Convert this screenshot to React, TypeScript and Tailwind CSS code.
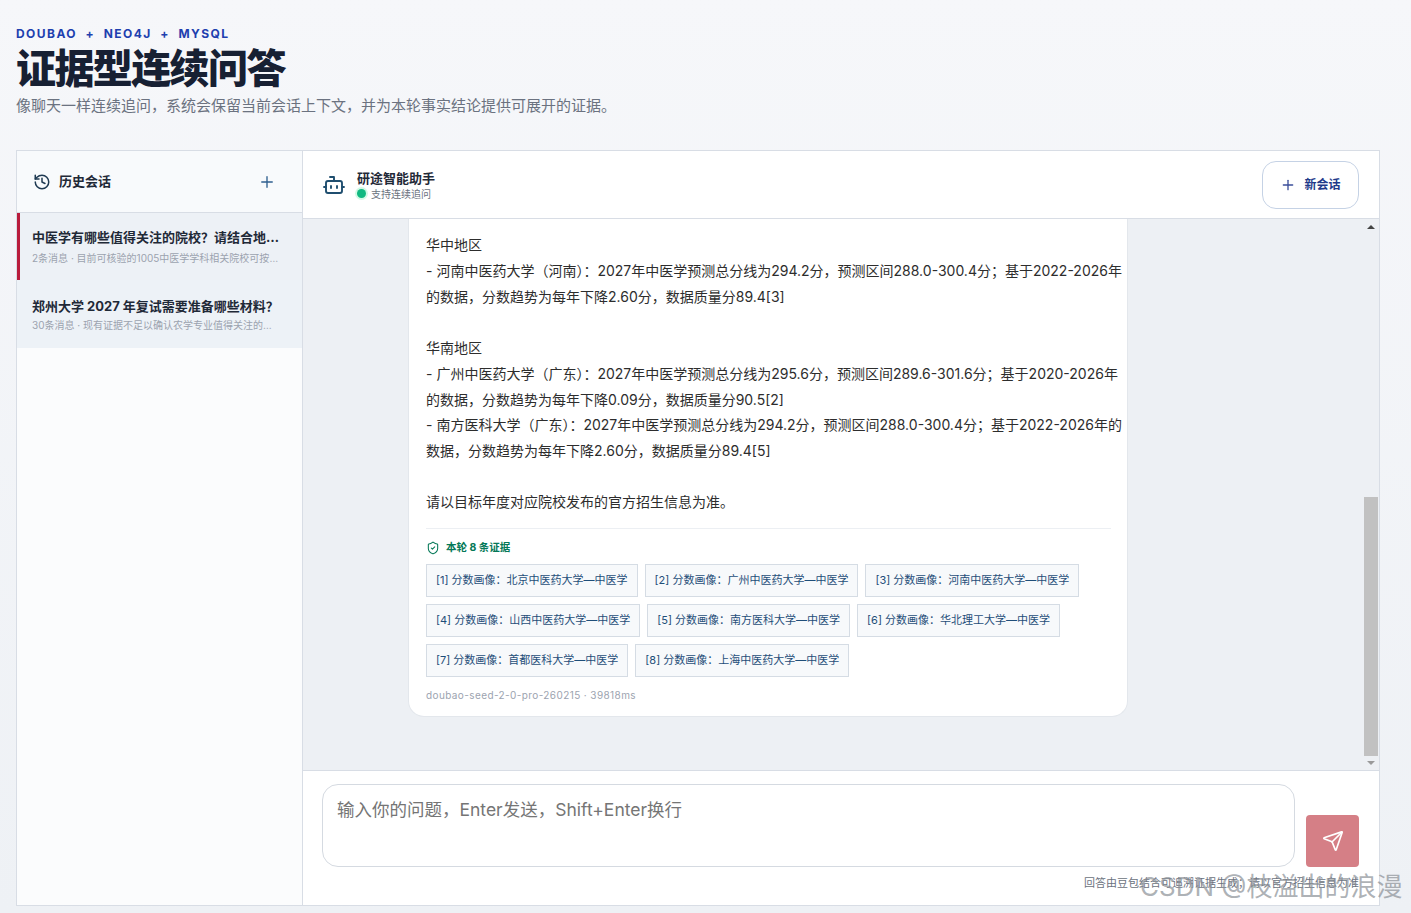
import { Bot, History, Plus, Send, ShieldCheck } from "lucide-react";

const lines = [
  "华中地区",
  "- 河南中医药大学（河南）：2027年中医学预测总分线为294.2分，预测区间288.0-300.4分；基于2022-2026年",
  "的数据，分数趋势为每年下降2.60分，数据质量分89.4[3]",
  "",
  "华南地区",
  "- 广州中医药大学（广东）：2027年中医学预测总分线为295.6分，预测区间289.6-301.6分；基于2020-2026年",
  "的数据，分数趋势为每年下降0.09分，数据质量分90.5[2]",
  "- 南方医科大学（广东）：2027年中医学预测总分线为294.2分，预测区间288.0-300.4分；基于2022-2026年的",
  "数据，分数趋势为每年下降2.60分，数据质量分89.4[5]",
  "",
  "请以目标年度对应院校发布的官方招生信息为准。",
];

const chips = [
  ["[1] 分数画像：北京中医药大学—中医学", "[2] 分数画像：广州中医药大学—中医学", "[3] 分数画像：河南中医药大学—中医学"],
  ["[4] 分数画像：山西中医药大学—中医学", "[5] 分数画像：南方医科大学—中医学", "[6] 分数画像：华北理工大学—中医学"],
  ["[7] 分数画像：首都医科大学—中医学", "[8] 分数画像：上海中医药大学—中医学"],
];

export default function App() {
  return (
    <div className="relative h-[913px] overflow-hidden bg-gradient-to-b from-[#f6f7fa] to-[#eef1f5] pl-4 pr-[31px] pt-[26px] font-[Inter,'Noto_Sans_CJK_SC',sans-serif]">
      <header className="h-[124px]">
        <p className="text-[12px] font-bold leading-4 tracking-[0.12em] text-[#1e40af] whitespace-pre">DOUBAO  +  NEO4J  +  MYSQL</p>
        <h1 className="mt-[3px] text-[40px] font-black leading-[48px] tracking-[-0.04em] text-[#172033]">证据型连续问答</h1>
        <p className="mt-[1px] text-[15px] leading-6 text-[#6b7280]">像聊天一样连续追问，系统会保留当前会话上下文，并为本轮事实结论提供可展开的证据。</p>
      </header>

      <main className="flex h-[756px] border border-[#d8dde5] bg-white">
        <aside className="flex w-[286px] shrink-0 flex-col border-r border-[#d8dde5] bg-[#fbfcfd]">
          <div className="flex h-[62px] shrink-0 items-center justify-between border-b border-[#d8dde5] bg-[#f8fafc] pl-4 pr-[26px]">
            <div className="flex items-center gap-2">
              <History size={18} strokeWidth={2} className="text-[#1f3a52]" />
              <span className="text-[13px] font-bold text-[#1f2937]">历史会话</span>
            </div>
            <Plus size={18} strokeWidth={1.8} className="text-[#2f5f8f]" />
          </div>
          <div className="flex h-[67px] flex-col justify-center border-l-[3px] border-[#b91c3c] bg-[#edf1f6] pl-3 pr-[22px]">
            <p className="truncate text-[13px] font-bold leading-5 text-[#1f2937]">中医学有哪些值得关注的院校？请结合地区和分数线</p>
            <p className="mt-[3px] truncate text-[10px] leading-4 text-[#9ca3af]">2条消息 · 目前可核验的1005中医学学科相关院校可按地区分类</p>
          </div>
          <div className="flex h-[68px] flex-col justify-center bg-[#edf2f7] pl-[15px] pr-[22px]">
            <p className="truncate text-[13px] font-bold leading-5 text-[#1f2937]">郑州大学 2027 年复试需要准备哪些材料？</p>
            <p className="mt-[1px] truncate text-[10px] leading-4 text-[#9ca3af]">30条消息 · 现有证据不足以确认农学专业值得关注的院校和地区</p>
          </div>
        </aside>

        <section className="flex min-w-0 flex-1 flex-col">
          <div className="flex h-[68px] shrink-0 items-center justify-between border-b border-[#d8dde5] pl-[19px] pr-5">
            <div className="flex items-center gap-[11px]">
              <Bot size={24} strokeWidth={1.9} className="text-[#1f4e6f]" />
              <div>
                <p className="text-[13px] font-bold leading-[18px] text-[#1f2937]">研途智能助手</p>
                <div className="flex items-center gap-[5px]">
                  <span className="h-[9px] w-[9px] rounded-full bg-[#10b981] shadow-[0_0_0_2px_#d1fae5]" />
                  <span className="text-[10px] leading-[14px] text-[#6b7280]">支持连续追问</span>
                </div>
              </div>
            </div>
            <button className="flex h-[48px] w-[97px] items-center justify-center gap-2 rounded-[14px] border border-[#c5d2e5] bg-white text-[12px] font-bold text-[#1e3a8a]">
              <Plus size={16} strokeWidth={2} className="text-[#3b4f9a]" />
              新会话
            </button>
          </div>

          <div className="flex h-[552px] shrink-0 border-b border-[#d8dde5] bg-[#edf0f4]">
            <div className="flex min-w-0 flex-1 flex-col justify-end overflow-hidden pb-[53px] pl-[105px]">
              <article className="w-[720px] rounded-b-2xl border-b border-r border-l border-[#e3e7ec] bg-white pb-[13px] pl-[17px] pr-4 pt-[14px]">
                <div className="text-[14px] leading-[25.7px] text-[#2d2d2d]">
                  {lines.map((line, i) => (
                    <p key={i} className="h-[25.7px] whitespace-pre">{line}</p>
                  ))}
                </div>
                <div className="mt-[13px] border-t border-[#eceff3] pt-[11px]">
                  <div className="flex items-center gap-[6px]">
                    <ShieldCheck size={14} strokeWidth={1.8} className="text-[#047857]" />
                    <span className="text-[10.5px] font-bold leading-4 text-[#047857]">本轮 8 条证据</span>
                  </div>
                  <div className="mt-2 flex flex-col gap-[7px]">
                    {chips.map((row, i) => (
                      <div key={i} className="flex gap-[7px]">
                        {row.map((chip) => (
                          <span key={chip} className="flex h-[33px] items-center border border-[#d5dce4] bg-[#f7f9fb] px-[9px] text-[11px] whitespace-nowrap text-[#1f4e79]">{chip}</span>
                        ))}
                      </div>
                    ))}
                  </div>
                  <p className="mt-[10px] text-[10px] leading-4 tracking-[0.04em] text-[#9ca3af]">doubao-seed-2-0-pro-260215 · 39818ms</p>
                </div>
              </article>
            </div>
            <div className="flex w-[17px] shrink-0 flex-col items-center pt-[6px] pb-[5px]">
              <span className="h-0 w-0 border-x-[4px] border-b-[4px] border-x-transparent border-b-[#444]" />
              <span className="flex-1" />
              <span className="h-[259px] w-[14px] bg-[#c1c1c1]" />
              <span className="mt-[5px] h-0 w-0 border-x-[4px] border-t-[4px] border-x-transparent border-t-[#9a9a9a]" />
            </div>
          </div>

          <div className="flex flex-1 gap-[11px] pl-[19px] pr-5 pt-[13px]">
            <div className="min-w-0 flex-1">
              <textarea
                readOnly
                placeholder="输入你的问题，Enter发送，Shift+Enter换行"
                className="h-[83px] w-full resize-none rounded-2xl border border-[#d5dae1] bg-white px-[14px] py-[13px] text-[17.5px] leading-6 outline-none placeholder:text-[#757575]"
              />
            </div>
            <div className="flex w-[53px] shrink-0 flex-col pt-[31px]">
              <button className="flex h-[52px] w-[53px] items-center justify-center rounded-[4px] bg-[#d57f86]">
                <Send size={22} strokeWidth={1.8} className="text-white" />
              </button>
            </div>
          </div>
        </section>
      </main>

      <p className="absolute left-[1084px] top-[875px] whitespace-nowrap text-[11px] leading-4 text-[#6b7280]">回答由豆包结合可追溯证据生成；请以官方招生信息为准</p>
      <p className="pointer-events-none absolute left-[1140px] top-[869px] whitespace-nowrap text-[26px] leading-9 text-[#8a8f96]/70">CSDN @枝溢出的浪漫</p>
    </div>
  );
}
